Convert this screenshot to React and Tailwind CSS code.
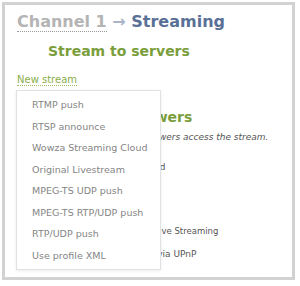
export default function App() {
  const items = [
    'RTMP push',
    'RTSP announce',
    'Wowza Streaming Cloud',
    'Original Livestream',
    'MPEG-TS UDP push',
    'MPEG-TS RTP/UDP push',
    'RTP/UDP push',
    'Use profile XML',
  ];
  return (
    <div className="h-[286px] w-[300px] bg-white pl-[2px] pt-[2px] font-['DejaVu_Sans',sans-serif]">
      <div className="relative h-[278px] w-[293px] border-[3px] border-[#d2d2d2] bg-white">
        <div className="pl-[12px] pt-[5px]">
          <h1 className="text-[16px] font-bold leading-[24px]">
            <span className="border-b border-dotted border-[#9a9a9a] text-[#b4b4b4]">Channel 1</span>
            <span className="text-[#a8b4c8]"> → </span>
            <span className="text-[#5a7096]">Streaming</span>
          </h1>
          <h2 className="mt-[7px] pl-[31px] text-[14px] font-bold leading-[20px] text-[#7b9e3c]">Stream to servers</h2>
          <div className="mt-[11px] text-[10px] leading-[16px]">
            <span className="border-b border-dotted border-[#9cbb5e] text-[#8aae4c]">New stream</span>
          </div>
          <h2 className="mt-[19px] pl-[31px] text-[14px] font-bold leading-[20px] text-[#7b9e3c]">Stream to viewers</h2>
          <p className="mt-[3px] pl-[71px] text-[9px] italic leading-[14px] text-[#555]">Choose how viewers access the stream.</p>
          <p className="mt-[16px] pl-[76px] text-[9px] leading-[14px] text-[#555]">Unicast enabled</p>
          <p className="mt-[50px] pl-[86px] text-[8.5px] leading-[14px] text-[#555]">Apple HTTP Live Streaming</p>
          <p className="mt-[9px] pl-[79px] text-[9px] leading-[14px] text-[#555]">Discoverable via UPnP</p>
        </div>
        <ul className="absolute left-[11px] top-[85px] w-[145px] border border-[#e2e2e2] bg-white py-[3px] shadow-[0_1px_3px_rgba(0,0,0,0.08)]">
          {items.map((t) => (
            <li key={t} className="h-[21.5px] pl-[15px] text-[9.5px] leading-[21.5px] text-[#858585]">
              {t}
            </li>
          ))}
        </ul>
      </div>
    </div>
  );
}
